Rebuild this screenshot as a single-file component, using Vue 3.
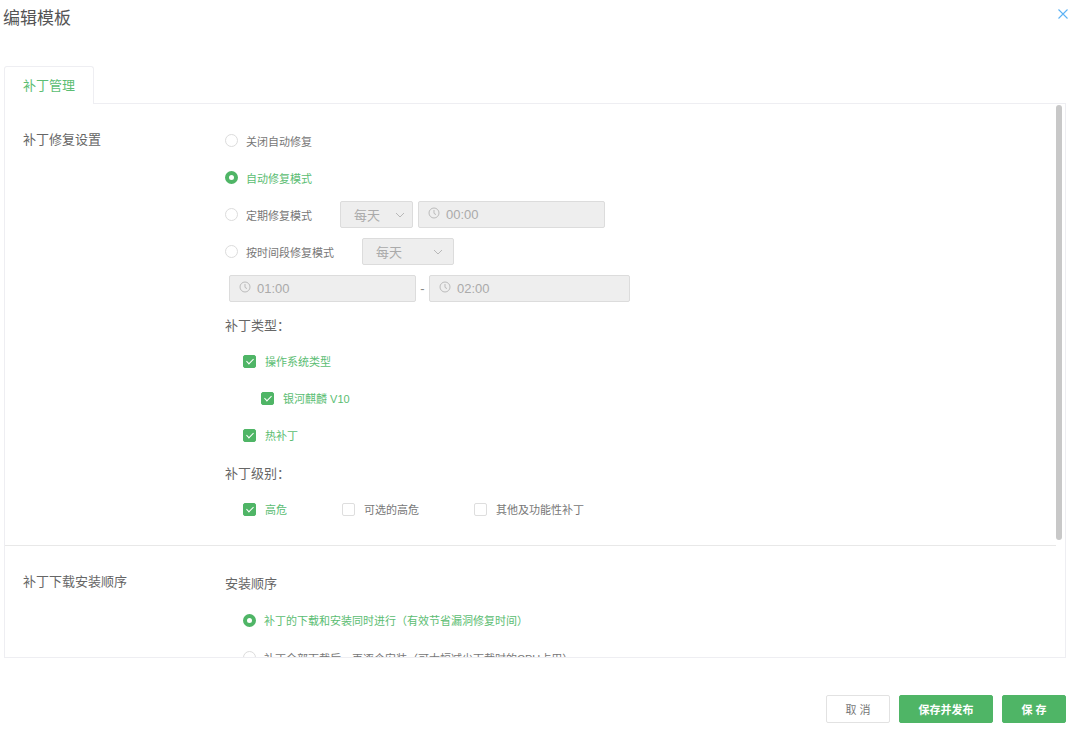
<script setup>
const levels = [
  { label: '高危', checked: true, width: 99 },
  { label: '可选的高危', checked: false, width: 132 },
  { label: '其他及功能性补丁', checked: false, width: 0 },
];
</script>

<template>
  <div class="dialog">
    <header class="dialog-head">
      <h1 class="title">编辑模板</h1>
      <svg class="close" viewBox="0 0 10 10" width="10" height="10">
        <path d="M0.5 0.5L9.5 9.5M9.5 0.5L0.5 9.5" stroke="#5cb2f5" stroke-width="1.1" fill="none" />
      </svg>
    </header>

    <div class="tabs">
      <div class="tab">补丁管理</div>
    </div>

    <div class="panel">
      <div class="scrollbar"></div>
      <section class="section first">
        <div class="section-label">补丁修复设置</div>
        <div class="section-body">
          <div class="row">
            <span class="radio"></span>
            <span class="opt">关闭自动修复</span>
          </div>
          <div class="row">
            <span class="radio on"></span>
            <span class="opt green">自动修复模式</span>
          </div>
          <div class="row">
            <span class="radio"></span>
            <span class="opt w-mode1">定期修复模式</span>
            <span class="field select w73">每天
              <svg class="chev" viewBox="0 0 10 6" width="10" height="6"><path d="M1 1L5 5L9 1" /></svg>
            </span>
            <span class="field time w187 ml5">
              <svg class="clock" viewBox="0 0 12 12" width="12" height="12"><circle cx="6" cy="6" r="5" /><path d="M6 3V6.4L8 7.6" /></svg>
              00:00
            </span>
          </div>
          <div class="row">
            <span class="radio"></span>
            <span class="opt w-mode2">按时间段修复模式</span>
            <span class="field select w92">每天
              <svg class="chev" viewBox="0 0 10 6" width="10" height="6"><path d="M1 1L5 5L9 1" /></svg>
            </span>
          </div>
          <div class="row tight time-row">
            <span class="field time w187">
              <svg class="clock" viewBox="0 0 12 12" width="12" height="12"><circle cx="6" cy="6" r="5" /><path d="M6 3V6.4L8 7.6" /></svg>
              01:00
            </span>
            <span class="dash">-</span>
            <span class="field time w201">
              <svg class="clock" viewBox="0 0 12 12" width="12" height="12"><circle cx="6" cy="6" r="5" /><path d="M6 3V6.4L8 7.6" /></svg>
              02:00
            </span>
          </div>
          <div class="row tight heading">补丁类型：</div>
          <div class="row tall indent1">
            <span class="check on"></span>
            <span class="opt green">操作系统类型</span>
          </div>
          <div class="row tight indent2">
            <span class="check on"></span>
            <span class="opt green">银河麒麟 V10</span>
          </div>
          <div class="row tall indent1">
            <span class="check on"></span>
            <span class="opt green">热补丁</span>
          </div>
          <div class="row tight heading">补丁级别：</div>
          <div class="row tall indent1">
            <span
              v-for="item in levels"
              :key="item.label"
              class="level"
              :style="item.width ? { width: item.width + 'px' } : null"
            >
              <span class="check" :class="{ on: item.checked }"></span>
              <span class="opt" :class="{ green: item.checked }">{{ item.label }}</span>
            </span>
          </div>
        </div>
      </section>

      <section class="section second">
        <div class="section-label">补丁下载安装顺序</div>
        <div class="section-body">
          <div class="row heading">安装顺序</div>
          <div class="row tall indent1">
            <span class="radio on"></span>
            <span class="opt green">补丁的下载和安装同时进行（有效节省漏洞修复时间）</span>
          </div>
          <div class="row indent1">
            <span class="radio"></span>
            <span class="opt">补丁全部下载后，再逐个安装（可大幅减少下载时的CPU占用）</span>
          </div>
        </div>
      </section>
    </div>

    <footer class="dialog-foot">
      <button class="btn">取 消</button>
      <button class="btn primary wide">保存并发布</button>
      <button class="btn primary">保 存</button>
    </footer>
  </div>
</template>

<style>
html,
body {
  background: #fff;
}
</style>

<style scoped>
.dialog {
  width: 1080px;
  height: 741px;
  box-sizing: border-box;
  padding: 0 14px 0 4px;
  font-family: "Liberation Sans", "Noto Sans CJK SC", sans-serif;
  color: #666;
  overflow: hidden;
}

.dialog-head {
  height: 66px;
  display: flex;
  justify-content: space-between;
  align-items: flex-start;
}

.title {
  margin: 7px 0 0 -1px;
  font-size: 17px;
  line-height: 24px;
  font-weight: 400;
  color: #555;
}

.close {
  margin: 9px -2px 0 0;
}

.tabs {
  height: 38px;
  box-sizing: border-box;
  border-bottom: 1px solid #eeeef2;
}

.tab {
  width: 90px;
  height: 38px;
  box-sizing: border-box;
  border: 1px solid #eeeef2;
  border-bottom: 0;
  border-radius: 3px 3px 0 0;
  background: #fff;
  color: #5bbd72;
  font-size: 13px;
  line-height: 37px;
  text-align: center;
}

.panel {
  position: relative;
  height: 554px;
  box-sizing: border-box;
  border: 1px solid #eeeef2;
  border-top: 0;
  overflow: hidden;
}

.scrollbar {
  position: absolute;
  top: 1px;
  right: 3px;
  width: 6px;
  height: 435px;
  border-radius: 3px;
  background: #c8c8c8;
}

.section {
  display: flex;
  margin-right: 9px;
  padding-left: 18px;
}

.section.first {
  padding-top: 18px;
  height: 423px;
  border-bottom: 1px solid #e8e8e8;
}

.section.second {
  padding-top: 18px;
}

.section-label {
  width: 202px;
  flex: none;
  font-size: 13px;
  line-height: 36px;
  height: 36px;
  color: #666;
}

.section-body {
  flex: 1;
}

.row {
  display: flex;
  align-items: center;
  height: 37px;
  font-size: 11px;
}

.row.tight {
  height: 36px;
}

.row.tall {
  height: 38px;
}

.heading {
  font-size: 13px;
  color: #666;
}

.indent1 {
  padding-left: 18px;
}

.indent2 {
  padding-left: 36px;
}

.time-row {
  padding-left: 4px;
}

.opt {
  color: #777;
  white-space: nowrap;
}

.opt.green {
  color: #5bbd72;
}

.w-mode1 {
  width: 94px;
}

.w-mode2 {
  width: 116px;
}

.radio {
  flex: none;
  width: 13px;
  height: 13px;
  box-sizing: border-box;
  margin-right: 8px;
  border: 1px solid #dcdcdc;
  border-radius: 50%;
  background: #fff;
}

.radio.on {
  border: 4px solid #4fb566;
  background: #fff;
}

.check {
  position: relative;
  flex: none;
  width: 13px;
  height: 13px;
  box-sizing: border-box;
  margin-right: 9px;
  border: 1px solid #dedede;
  border-radius: 2px;
  background: #fff;
}

.check.on {
  border-color: #4fb566;
  background: #4fb566;
}

.check.on::after {
  content: "";
  position: absolute;
  left: 3.5px;
  top: 1px;
  width: 3px;
  height: 6px;
  border: solid #fff;
  border-width: 0 1px 1px 0;
  transform: rotate(45deg);
}

.level {
  display: flex;
  align-items: center;
}

.field {
  display: flex;
  align-items: center;
  height: 27px;
  box-sizing: border-box;
  border: 1px solid #dcdcdc;
  border-radius: 2px;
  background: #eeeeee;
  color: #aaa;
  font-size: 13px;
}

.select {
  justify-content: space-between;
  padding: 0 7px 0 13px;
}

.time {
  padding-left: 9px;
  gap: 6px;
}

.w73 {
  width: 73px;
}

.w92 {
  width: 92px;
  padding-right: 10px;
}

.w187 {
  width: 187px;
}

.w201 {
  width: 201px;
}

.ml5 {
  margin-left: 5px;
}

.dash {
  width: 13px;
  text-align: center;
  font-size: 13px;
  color: #888;
}

.chev path {
  fill: none;
  stroke: #b8b8b8;
  stroke-width: 1;
}

.clock {
  margin-top: -3px;
}

.clock circle,
.clock path {
  fill: none;
  stroke: #bbb;
  stroke-width: 1;
}

.dialog-foot {
  display: flex;
  justify-content: flex-end;
  gap: 9px;
  padding-top: 37px;
}

.btn {
  width: 64px;
  height: 28px;
  padding: 0;
  border: 1px solid #e2e2e2;
  border-radius: 2px;
  background: #fff;
  color: #777;
  font-family: inherit;
  font-size: 11px;
}

.btn.primary {
  border-color: #4fb566;
  background: #4fb566;
  color: #fff;
  font-weight: 700;
}

.btn.wide {
  width: 94px;
}
</style>
